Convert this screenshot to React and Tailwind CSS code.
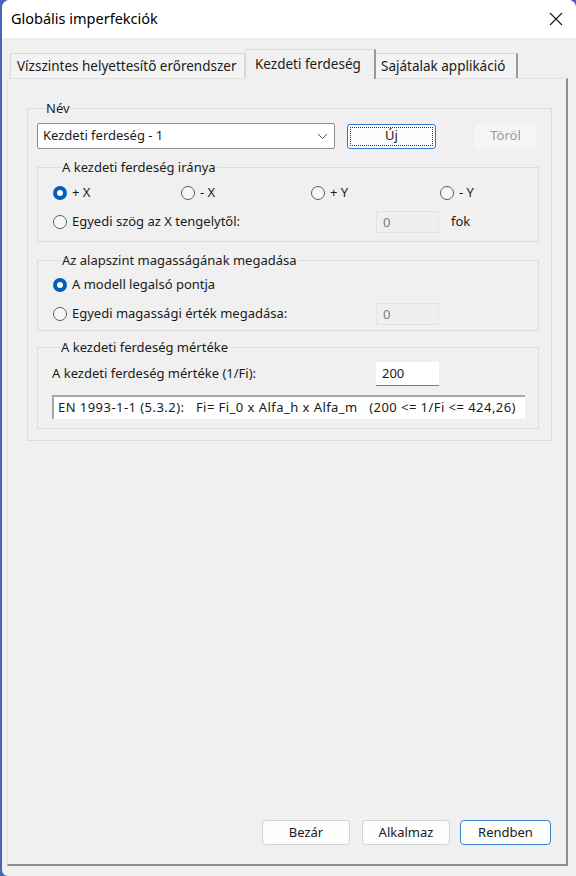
import React from 'react';

const FONT = "font-['Segoe_UI','Noto_Sans',sans-serif]";

function Radio({ checked, label, className = '' }) {
  return (
    <div className={`flex items-center gap-[5px] ${className}`}>
      {checked ? (
        <span className="w-[14px] h-[14px] shrink-0 rounded-full bg-[#005fb8] flex items-center justify-center">
          <span className="w-[6px] h-[6px] rounded-full bg-white" />
        </span>
      ) : (
        <span className="w-[14px] h-[14px] shrink-0 rounded-full border border-[#5d5d5d] bg-[#f7f7f7]" />
      )}
      <span>{label}</span>
    </div>
  );
}

function Group({ title, className = '', children }) {
  return (
    <fieldset className={`border border-[#dcdcdc] ${className}`}>
      <legend className="ml-[8px] px-[1px] leading-[16px]">{title}</legend>
      {children}
    </fieldset>
  );
}

function DisabledBox({ value }) {
  return (
    <div className="w-[63px] h-[22px] border border-[#e2e2e2] bg-[#efefef] text-[#7a7a7a] pl-[6px] leading-[20px]">
      {value}
    </div>
  );
}

function Btn({ children, primary, className = '' }) {
  return (
    <div
      className={`h-[25px] flex items-center justify-center rounded-[4px] bg-[#fdfdfd] border ${
        primary ? 'w-[91px] border-[#3b82d0]' : 'w-[88px] border-[#d3d3d3]'
      } ${className}`}
    >
      {children}
    </div>
  );
}

export default function App() {
  return (
    <div className={`w-[576px] h-[876px] bg-[#4a64b8] ${FONT} text-[13px] text-[#1a1a1a]`}>
      <div className="ml-[2px] w-[574px] h-[876px] bg-[#f0f0f0] rounded-tl-[8px] rounded-tr-[8px] rounded-bl-[6px] flex flex-col overflow-hidden">
        {/* title bar */}
        <div className="h-[38px] bg-white flex items-center justify-between pl-[9px] pr-[13px] shrink-0">
          <span className="text-[14.5px] text-black">Globális imperfekciók</span>
          <svg width="14" height="14" viewBox="0 0 14 14">
            <path d="M1 1 L13 13 M13 1 L1 13" stroke="#1a1a1a" strokeWidth="1.1" />
          </svg>
        </div>

        {/* tabs */}
        <div className="pt-[11px] pl-[8px] flex items-end h-[40px] shrink-0 text-[13.5px]">
          <div className="w-[235px] h-[25px] pl-[6px] flex items-center border border-b-0 border-[#d9d9d9] bg-[#f3f3f3]">
            Vízszintes helyettesítő erőrendszer
          </div>
          <div className="w-[131px] h-[30px] -mb-[1px] pl-[9px] flex items-center border-t border-l border-[#d9d9d9] border-r-2 border-r-[#9a9a9a] bg-[#f0f0f0] relative z-10">
            Kezdeti ferdeség
          </div>
          <div className="w-[142px] h-[25px] pl-[5px] flex items-center border-t border-[#d9d9d9] border-r-2 border-r-[#9a9a9a] bg-[#f3f3f3]">
            Sajátalak applikáció
          </div>
        </div>

        {/* tab panel */}
        <div className="ml-[5px] w-[561px] h-[788px] border-t border-l border-[#e3e3e3] border-r-2 border-b-2 border-r-[#8e8e8e] border-b-[#8e8e8e] flex flex-col pt-[21px] pl-[19px]">
          <Group title="Név" className="w-[524px] pl-[9px] pr-[12px] pb-[11px]">
            <div className="flex items-center mt-[7px] h-[26px]">
              <div className="w-[298px] h-[26px] bg-white border border-[#8b8b8b] rounded-[2px] flex items-center justify-between pl-[5px] pr-[6px]">
                <span>Kezdeti ferdeség - 1</span>
                <svg width="11" height="7" viewBox="0 0 11 7">
                  <path d="M1 1 L5.5 5.5 L10 1" stroke="#555" strokeWidth="1" fill="none" />
                </svg>
              </div>
              <div className="ml-[12px] w-[89px] h-[25px] rounded-[3px] border border-[#2b79c8] bg-[#fdfdfd] p-[2px]">
                <div className="w-full h-full border border-dotted border-[#333] flex items-center justify-center">
                  Új
                </div>
              </div>
              <div className="ml-[39px] w-[61px] h-[25px] rounded-[4px] bg-[#f5f5f5] text-[#9a9a9a] flex items-center justify-center">
                Töröl
              </div>
            </div>

            <Group title="A kezdeti ferdeség iránya" className="mt-[10px] w-[502px] pl-[15px] pb-[8px]">
              <div className="flex items-center mt-[8px] h-[20px]">
                <Radio checked label="+ X" className="w-[128px]" />
                <Radio label="- X" className="w-[130px]" />
                <Radio label="+ Y" className="w-[129px]" />
                <Radio label="- Y" />
              </div>
              <div className="flex items-center mt-[8px] h-[22px]">
                <Radio label="Egyedi szög az X tengelytől:" className="w-[323px]" />
                <DisabledBox value="0" />
                <span className="ml-[12px]">fok</span>
              </div>
            </Group>

            <Group title="Az alapszint magasságának megadása" className="mt-[10px] w-[502px] pl-[15px] pb-[5px]">
              <div className="flex items-center mt-[7px] h-[20px]">
                <Radio checked label="A modell legalsó pontja" />
              </div>
              <div className="flex items-center mt-[8px] h-[22px]">
                <Radio label="Egyedi magassági érték megadása:" className="w-[323px]" />
                <DisabledBox value="0" />
              </div>
            </Group>

            <Group title="A kezdeti ferdeség mértéke" className="mt-[8px] w-[502px] pl-[14px] pb-[9px]">
              <div className="flex items-center mt-[7px] h-[24px]">
                <span className="w-[324px]">A kezdeti ferdeség mértéke (1/Fi):</span>
                <div className="w-[63px] h-[24px] bg-white border-b border-[#7a7a7a] pl-[6px] leading-[23px]">
                  200
                </div>
              </div>
              <div className="mt-[9px] w-[473px] h-[24px] bg-white border-t-2 border-l-2 border-[#a7a7a7] pl-[4px] leading-[21px] whitespace-pre tracking-[0.45px]">
                {'EN 1993-1-1 (5.3.2):   Fi= Fi_0 x Alfa_h x Alfa_m   (200 <= 1/Fi <= 424,26)'}
              </div>
            </Group>
          </Group>

          <div className="flex-1" />

          <div className="flex justify-end pr-[15px] pb-[19px]">
            <Btn>Bezár</Btn>
            <Btn className="ml-[12px]">Alkalmaz</Btn>
            <Btn primary className="ml-[10px]">Rendben</Btn>
          </div>
        </div>
      </div>
    </div>
  );
}
